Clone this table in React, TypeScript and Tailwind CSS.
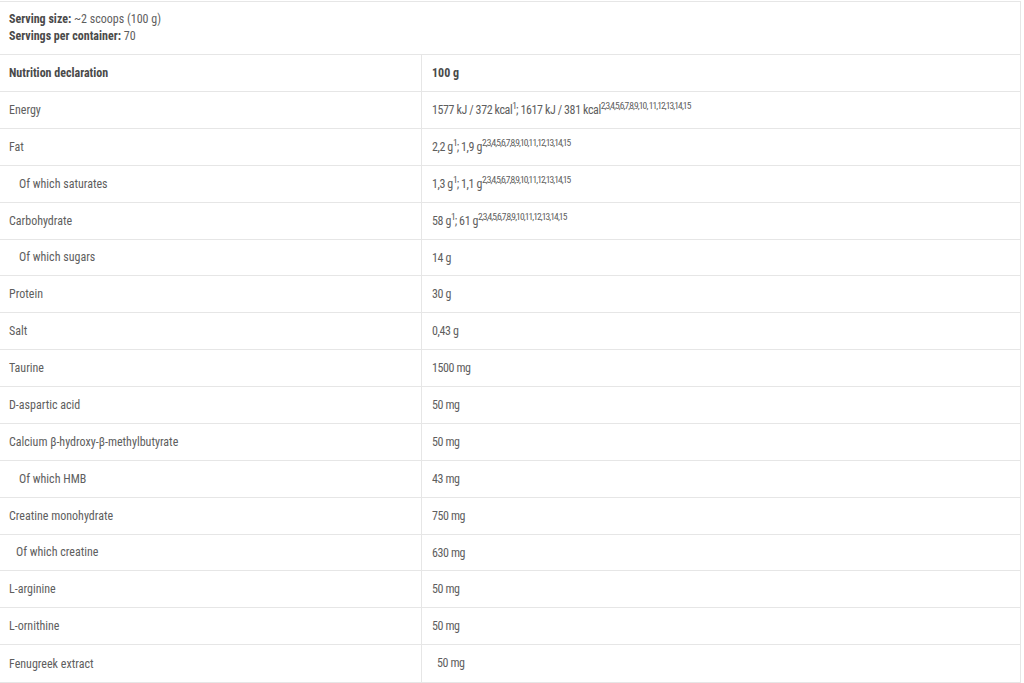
const sup = "2,3,4,5,6,7,8,9,10, 11,12,13,14,15"
const supShort = "2,3,4,5,6,7,8,9,10,11,12,13,14,15"

type Row = { label: string; value: React.ReactNode; indent?: number; valueIndent?: boolean }

const s = "text-[9.5px] tracking-[-0.9px]"

const rows: Row[] = [
  {
    label: "Energy",
    value: (
      <>
        1577 kJ / 372 kcal<sup className={s}>1</sup>; 1617 kJ / 381 kcal<sup className={s}>{sup}</sup>
      </>
    ),
  },
  {
    label: "Fat",
    value: (
      <>
        2,2 g<sup className={s}>1</sup>; 1,9 g<sup className={s}>{supShort}</sup>
      </>
    ),
  },
  {
    label: "Of which saturates",
    indent: 1,
    value: (
      <>
        1,3 g<sup className={s}>1</sup>; 1,1 g<sup className={s}>{supShort}</sup>
      </>
    ),
  },
  {
    label: "Carbohydrate",
    value: (
      <>
        58 g<sup className={s}>1</sup>; 61 g<sup className={s}>{supShort}</sup>
      </>
    ),
  },
  { label: "Of which sugars", indent: 1, value: "14 g" },
  { label: "Protein", value: "30 g" },
  { label: "Salt", value: "0,43 g" },
  { label: "Taurine", value: "1500 mg" },
  { label: "D-aspartic acid", value: "50 mg" },
  { label: "Calcium β-hydroxy-β-methylbutyrate", value: "50 mg" },
  { label: "Of which HMB", indent: 1, value: "43 mg" },
  { label: "Creatine monohydrate", value: "750 mg" },
  { label: "Of which creatine", indent: 2, value: "630 mg" },
  { label: "L-arginine", value: "50 mg" },
  { label: "L-ornithine", value: "50 mg" },
  { label: "Fenugreek extract", value: "50 mg", valueIndent: true },
]

export default function App() {
  return (
    <div
      className="bg-white w-[1024px] h-[683px] overflow-hidden pt-px text-[12px] text-[#5e5e5e]"
      style={{ fontFamily: '"Liberation Sans Narrow", "Roboto Condensed", "DejaVu Sans Condensed", sans-serif' }}
    >
      <div className="w-[1021px] border-t border-r border-b border-[#e6e6e6]">
        {/* serving info */}
        <div className="h-[53px] border-b border-[#e6e6e6] px-[9px] pt-[9px] leading-[17px]">
          <div>
            <span className="font-bold text-[#4a4a4a]">Serving size:</span> ~2 scoops (100 g)
          </div>
          <div>
            <span className="font-bold text-[#4a4a4a]">Servings per container:</span> 70
          </div>
        </div>

        <div className="grid grid-cols-[422px_1fr] h-[37px] border-b border-[#e6e6e6] font-bold text-[#4a4a4a]">
          <div className="border-r border-[#e6e6e6] pl-[9px] flex items-center">Nutrition declaration</div>
          <div className="pl-[10px] flex items-center">100 g</div>
        </div>

        {rows.map((row, i) => (
          <div
            key={i}
            className="grid grid-cols-[422px_1fr] h-[36.875px] border-b border-[#e6e6e6] last:border-b-0"
          >
            <div
              className={
                "border-r border-[#e6e6e6] flex items-center " +
                (row.indent === 1 ? "pl-[19px]" : row.indent === 2 ? "pl-[16px]" : "pl-[9px]")
              }
            >
              {row.label}
            </div>
            <div
              className={
                "flex items-start pt-[11px] tracking-[-0.4px] " + (row.valueIndent ? "pl-[15px]" : "pl-[10px]")
              }
            >
              <span className="leading-[15px]">{row.value}</span>
            </div>
          </div>
        ))}
      </div>
    </div>
  )
}
